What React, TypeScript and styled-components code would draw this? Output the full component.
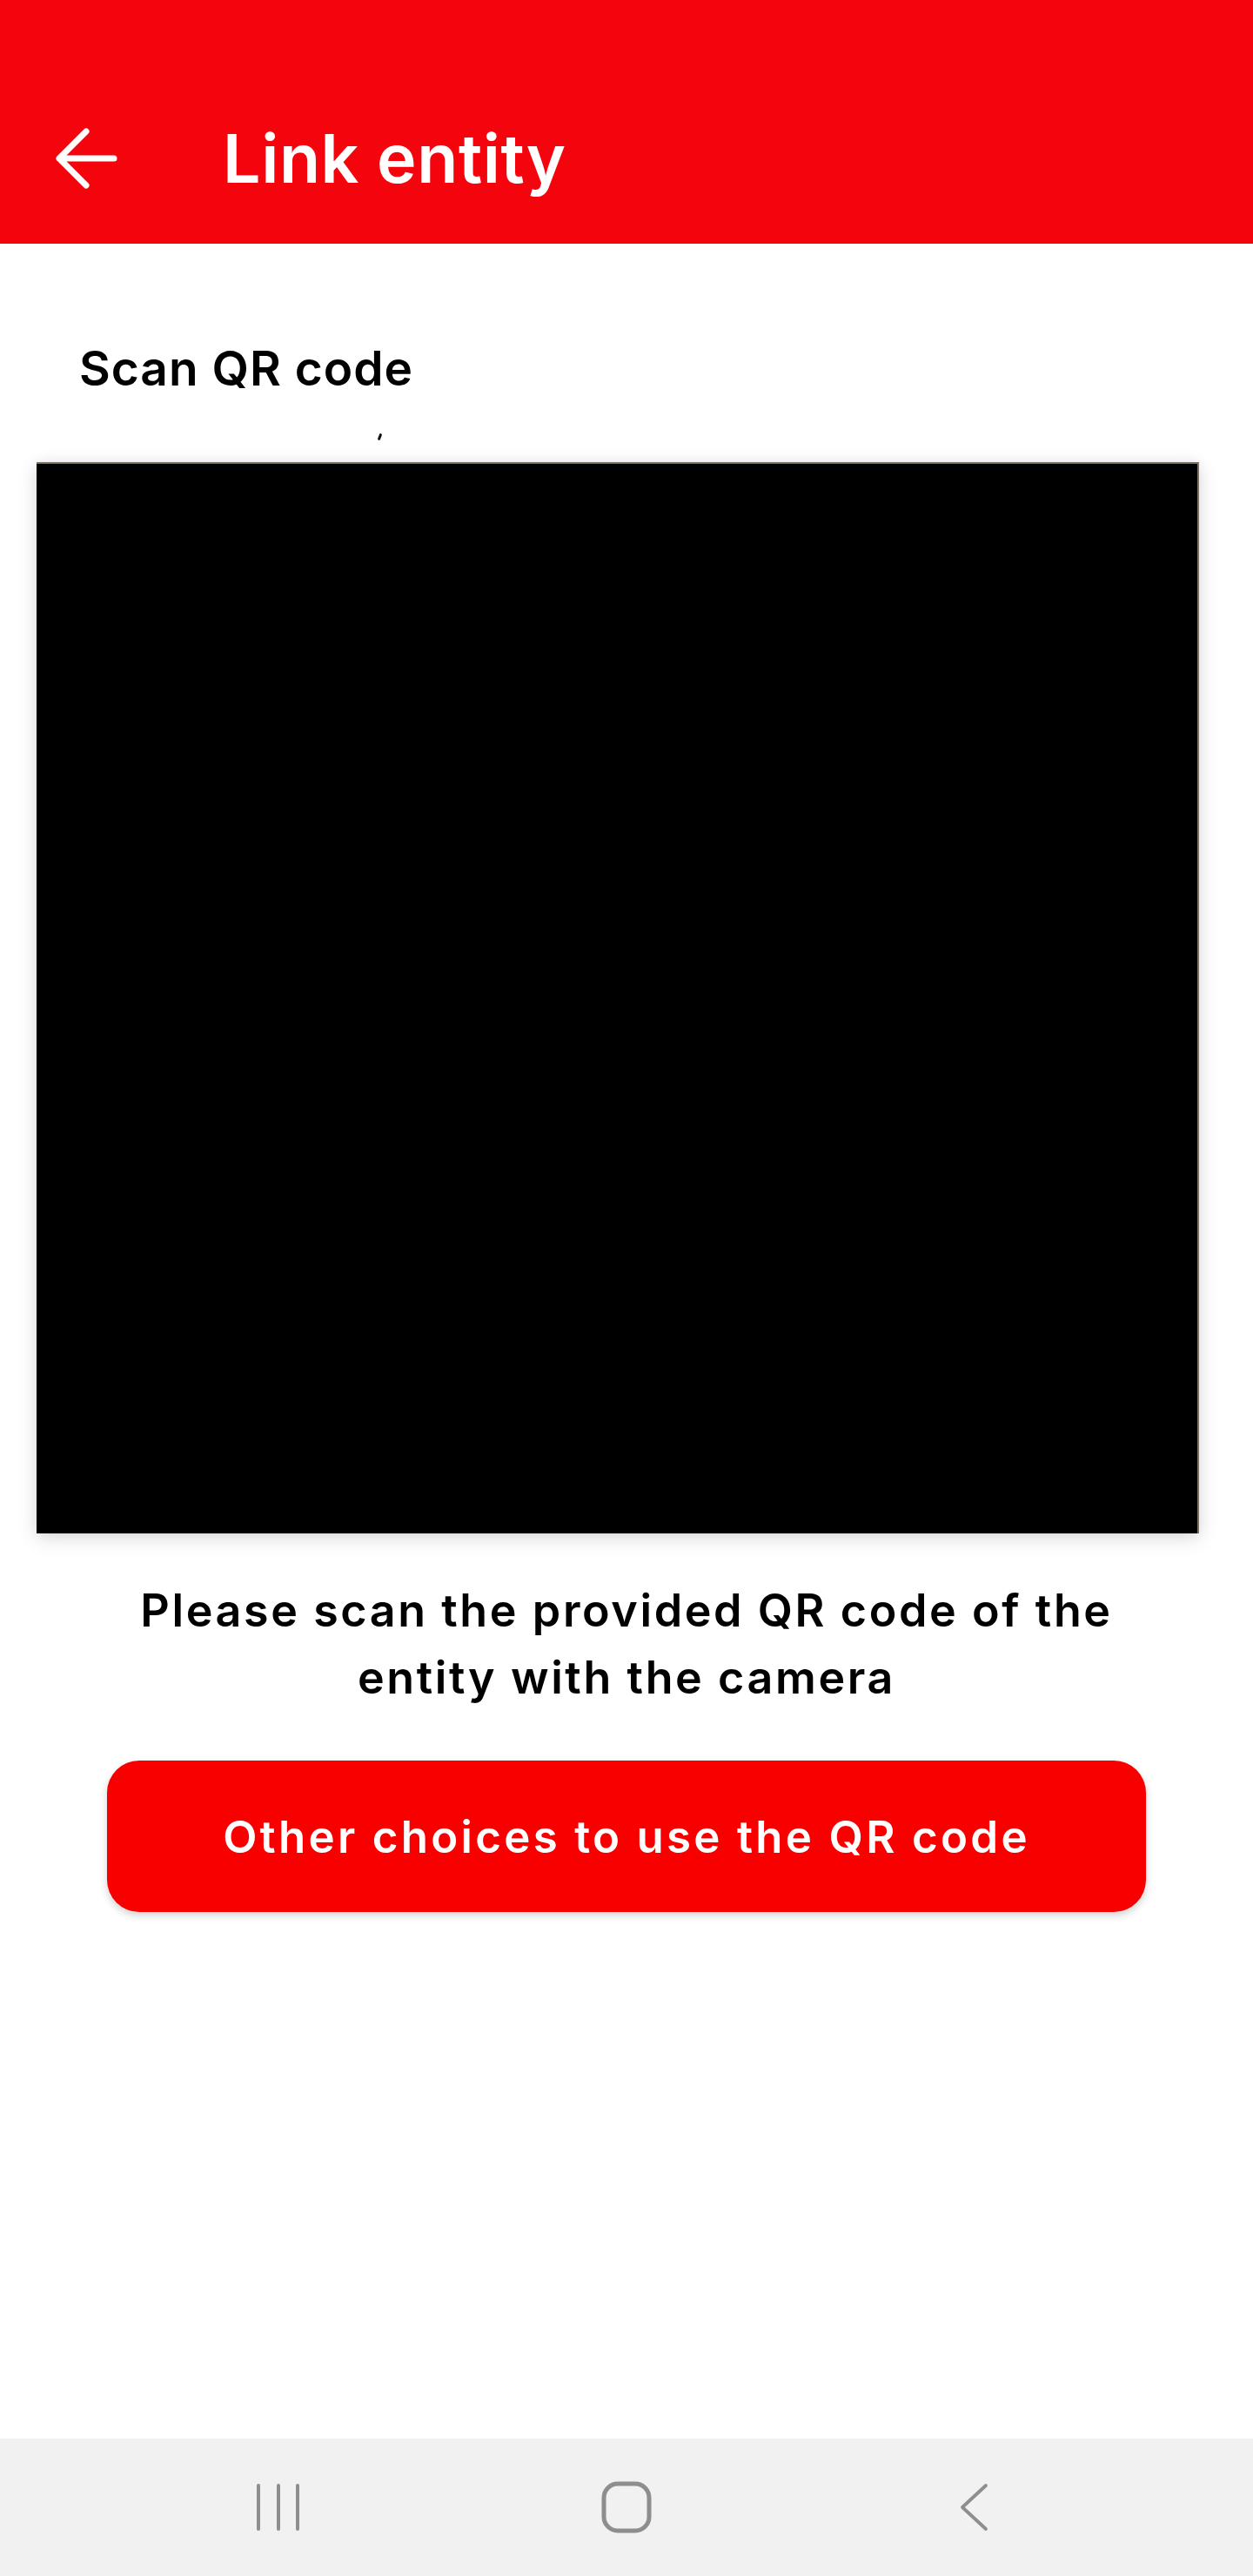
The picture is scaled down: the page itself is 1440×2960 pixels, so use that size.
import React from 'react';
import styled, { createGlobalStyle } from 'styled-components';

const GlobalStyle = createGlobalStyle`
    html, body {
        margin:0;
        padding:0;
        background:#fff;
    }
    body {
        font-family:Inter, "Open Sans", Arial, sans-serif;
        -webkit-font-smoothing:antialiased;
    }
`;

const Screen = styled.div`
    display:flex;
    flex-direction:column;
    min-height:100vh;
    width:1440px;
    background:#fff;
`;

const AppBar = styled.header`
    background:#f4050e;
    height:280px;
    box-sizing:border-box;
    padding-top:84px;
    display:flex;
    align-items:center;
`;

const BackButton = styled.button`
    width:72px;
    height:72px;
    margin-left:63px;
    padding:0;
    border:none;
    background:transparent;
    display:flex;
    align-items:center;
    justify-content:center;
`;

const AppTitle = styled.h1`
    margin:0 0 0 121px;
    color:#fff;
    font-size:77px;
    font-weight:600;
    letter-spacing:0.6px;
    line-height:1;
`;

const Content = styled.main`
    flex:1;
    display:flex;
    flex-direction:column;
`;

const SectionTitle = styled.h2`
    margin:110px 0 0 91px;
    font-size:55px;
    line-height:66px;
    font-weight:600;
    color:#000;
    letter-spacing:1px;
`;

const Gap = styled.div`
    height:75px;
    display:flex;
    align-items:center;
`;

const Tick = styled.span`
    width:3px;
    height:8px;
    margin-left:435px;
    margin-top:16px;
    background:#111;
    border-radius:2px;
    transform:rotate(20deg);
`;

const CameraView = styled.div`
    margin:0 62px 0 42px;
    height:1231px;
    background:#000;
    border-top:2px solid #7c705f;
    border-right:2px solid #7c705f;
    box-sizing:border-box;
    box-shadow:0 6px 22px rgba(0,0,0,0.13), 0 0 14px rgba(0,0,0,0.06);
`;

const Hint = styled.p`
    margin:50px auto 0;
    max-width:1180px;
    text-align:center;
    font-size:52px;
    line-height:77px;
    font-weight:600;
    color:#000;
    letter-spacing:2.6px;
`;

const PrimaryButton = styled.button`
    margin:57px auto 0;
    width:1194px;
    height:174px;
    border:none;
    border-radius:37px;
    background:#f90000;
    color:#fff;
    font-family:inherit;
    font-size:51px;
    font-weight:600;
    letter-spacing:3.3px;
    box-shadow:0 4px 10px rgba(0,0,0,0.18);
`;

const NavBar = styled.nav`
    height:158px;
    background:#f1f1f1;
    display:grid;
    grid-template-columns:repeat(3, 400px);
    justify-content:center;
    justify-items:center;
    align-items:center;
`;

const NavIcon = styled.svg`
    display:block;
`;

const App: React.FC = () => {
    return <>
        <GlobalStyle />
        <Screen>
            <AppBar>
                <BackButton aria-label="Back">
                    <svg width="72" height="72" viewBox="0 0 72 72" fill="none">
                        <path d="M68 36H5M5 36L36 5M5 36L36 67" stroke="#fff" strokeWidth="7" strokeLinecap="round" strokeLinejoin="round" />
                    </svg>
                </BackButton>
                <AppTitle>Link entity</AppTitle>
            </AppBar>
            <Content>
                <SectionTitle>Scan QR code</SectionTitle>
                <Gap><Tick /></Gap>
                <CameraView />
                <Hint>Please scan the provided QR code of the entity with the camera</Hint>
                <PrimaryButton>Other choices to use the QR code</PrimaryButton>
            </Content>
            <NavBar>
                <NavIcon width="56" height="56" viewBox="0 0 56 56" fill="none">
                    <path d="M5 3V53M28 3V53M50 3V53" stroke="#8e8e8e" strokeWidth="4" strokeLinecap="round" />
                </NavIcon>
                <NavIcon width="58" height="60" viewBox="0 0 58 60" fill="none">
                    <rect x="3" y="3" width="52" height="54" rx="16" stroke="#8e8e8e" strokeWidth="5" />
                </NavIcon>
                <NavIcon width="36" height="56" viewBox="0 0 36 56" fill="none">
                    <path d="M31 3L4 28L31 53" stroke="#8e8e8e" strokeWidth="3.8" strokeLinecap="round" strokeLinejoin="round" />
                </NavIcon>
            </NavBar>
        </Screen>
    </>
}

export default App;
